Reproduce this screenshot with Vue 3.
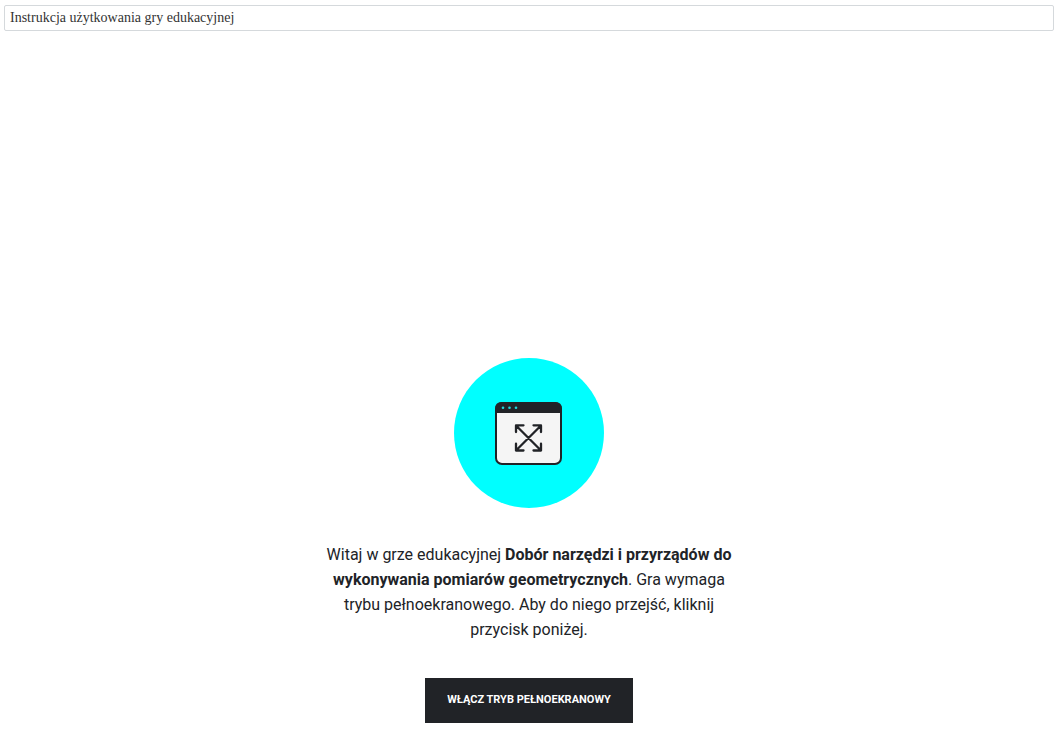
<script setup>
const gameTitle = 'Dobór narzędzi i przyrządów do wykonywania pomiarów geometrycznych'

function openFullscreen() {
  document.documentElement.requestFullscreen?.()
}
</script>

<template>
  <div class="page">
    <header class="instructions">
      <a href="#instrukcja">Instrukcja użytkowania gry edukacyjnej</a>
    </header>
    <main class="welcome">
      <svg class="emblem" viewBox="0 0 150 150" aria-hidden="true">
        <circle cx="75" cy="75" r="75" fill="#00ffff" />
        <rect x="42" y="45" width="65" height="61" rx="6" fill="#f5f5f5" stroke="#212327" stroke-width="2" />
        <path d="M41 55v-4q0-7 7-7h53q7 0 7 7v4z" fill="#212327" />
        <g fill="#20d8dc">
          <circle cx="49" cy="49.700" r="1.300" />
          <circle cx="55.500" cy="49.700" r="1.300" />
          <circle cx="62" cy="49.700" r="1.300" />
        </g>
        <path
          d="M62 67.500 87 92.500M87 67.500 62 92.500M62 74V67.300h7.500M79.500 67.300H87V74M87 85.700v6.800h-7.500M69.500 92.500H62v-6.800"
          fill="none"
          stroke="#212327"
          stroke-width="2.300"
          stroke-linecap="round"
          stroke-linejoin="round"
        />
      </svg>
      <p class="message">
        Witaj w grze edukacyjnej <strong>{{ gameTitle }}</strong>. Gra wymaga trybu pełnoekranowego. Aby do niego przejść, kliknij przycisk poniżej.
      </p>
      <button class="action" type="button" @click="openFullscreen">WŁĄCZ TRYB PEŁNOEKRANOWY</button>
    </main>
  </div>
</template>

<style>
body {
  margin: 0;
  background: #fff;
}
</style>

<style scoped>
.page {
  box-sizing: border-box;
  display: flex;
  flex-direction: column;
  min-height: 100vh;
  padding: 5px 9px 26px 4px;
}

.instructions {
  padding: 0 5px;
  border: 1px solid #d5d9dc;
  border-radius: 2px;
  font: 14px/24px "Liberation Serif", serif;
}

.instructions a {
  color: #333;
  text-decoration: none;
}

.welcome {
  display: flex;
  flex: 1;
  flex-direction: column;
  align-items: center;
  justify-content: flex-end;
  color: #212327;
  font-family: Roboto, sans-serif;
}

.emblem {
  width: 150px;
  height: 150px;
}

.message {
  max-width: 410px;
  margin: 34px 0 36px;
  font-size: 16px;
  line-height: 25px;
  text-align: center;
}

.message strong {
  font-weight: 700;
}

.action {
  height: 45px;
  padding: 0 22px 2px;
  border: 0;
  background: #212327;
  color: #fff;
  font: 700 11px/16px Roboto, sans-serif;
  cursor: pointer;
}
</style>
